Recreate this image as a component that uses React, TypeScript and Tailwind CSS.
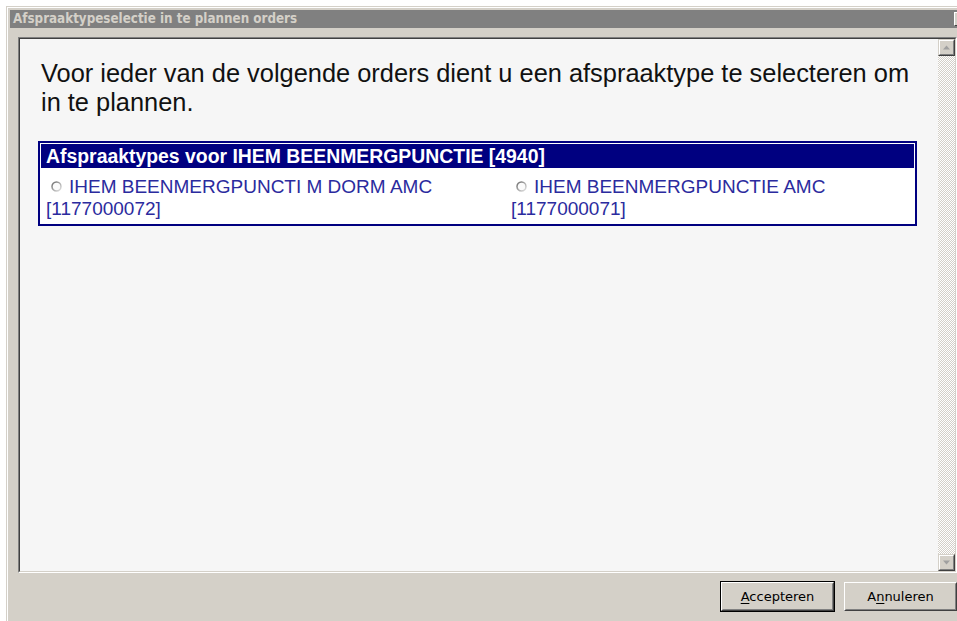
import { ReactNode } from "react";

const OPTIONS = [
  { label: "IHEM BEENMERGPUNCTI M DORM AMC", code: "1177000072" },
  { label: "IHEM BEENMERGPUNCTIE AMC", code: "1177000071" },
];

const Radio = () => (
  <svg
    width="11"
    height="11"
    viewBox="0 0 11 11"
    className="inline-block align-middle mr-[7px] ml-[5px] -mt-[2px]"
  >
    <defs>
      <linearGradient id="rb" x1="0" y1="0" x2="1" y2="1">
        <stop offset="0" stopColor="#6a6a6a" />
        <stop offset="1" stopColor="#e4e4e4" />
      </linearGradient>
    </defs>
    <circle cx="5.5" cy="5.5" r="4.5" fill="#fbfbfb" stroke="url(#rb)" strokeWidth="1.5" />
  </svg>
);

const ScrollArrow = ({ up }: { up?: boolean }) => (
  <div className="w-[17px] h-[17px] border border-t-[#d4d0c8] border-l-[#d4d0c8] border-b-[#404040] border-r-[#404040]">
    <div className="w-full h-full flex items-center justify-center bg-[#d4d0c8] border border-t-white border-l-white border-b-[#808080] border-r-[#808080]">
      <svg width="7" height="5" viewBox="0 0 7 5">
        {up ? (
          <path d="M3.5 0.5 L7 4.5 L0 4.5 Z" fill="#a0a0a0" />
        ) : (
          <path d="M0 0.5 L7 0.5 L3.5 4.5 Z" fill="#a0a0a0" />
        )}
      </svg>
    </div>
  </div>
);

const Button = ({ children, isDefault }: { children: ReactNode; isDefault?: boolean }) => {
  const face = (
    <div className="w-[113px] h-[29px] border border-t-white border-l-white border-b-[#404040] border-r-[#404040]">
      <div className="w-full h-full flex items-center justify-center border border-t-[#d4d0c8] border-l-[#d4d0c8] border-b-[#808080] border-r-[#808080] text-[13px] text-black font-['DejaVu_Sans',sans-serif]">
        {children}
      </div>
    </div>
  );
  return isDefault ? <div className="border border-black">{face}</div> : face;
};

export default function App() {
  return (
    <div className="w-[957px] h-[621px] overflow-hidden bg-white">
      <div className="ml-[6px] mt-[6px] w-[968px] h-[640px] border-l border-t border-[#d4d0c8] bg-[#d4d0c8]">
        <div className="h-full border-l border-t border-white p-[2px] flex flex-col">
          {/* caption */}
          <div className="h-[18px] bg-[#808080] flex items-center justify-between pl-[3px] pr-[2px]">
            <span className="text-[13.3px] font-bold text-[#d4d0c8] font-['DejaVu_Sans_Condensed',sans-serif] leading-none">
              Afspraaktypeselectie in te plannen orders
            </span>
            <div className="w-[16px] h-[14px] border border-t-white border-l-white border-b-[#404040] border-r-[#404040] bg-[#d4d0c8] flex items-center justify-center">
              <svg width="8" height="7" viewBox="0 0 8 7">
                <path d="M0.5 0.5 L7.5 6.5 M7.5 0.5 L0.5 6.5" stroke="#404040" strokeWidth="1.6" />
              </svg>
            </div>
          </div>

          <div className="pl-[8px] pt-[9px] flex flex-col">
            {/* sunken panel */}
            <div className="w-[939px] h-[536px] border border-t-[#808080] border-l-[#808080] border-b-white border-r-white">
              <div className="w-full h-full flex border border-t-[#404040] border-l-[#404040] border-b-[#d4d0c8] border-r-[#d4d0c8] bg-[#f6f6f6]">
                <div className="flex-1 px-[18px] pt-[20px] font-['Liberation_Sans',Arial,sans-serif]">
                  <p className="pl-[3px] text-[25.4px] leading-[28.5px] text-[#111]">
                    Voor ieder van de volgende orders dient u een afspraaktype te selecteren om in te plannen.
                  </p>

                  <div className="mt-[25px] w-[879px] border-2 border-[#000080] bg-white p-px">
                    <div className="h-[24px] bg-[#000080] pl-[5px] text-[19.4px] leading-[24px] font-bold text-white">
                      Afspraaktypes voor IHEM BEENMERGPUNCTIE [4940]
                    </div>
                    <div className="grid grid-cols-[465px_1fr] text-[19px] leading-[22px] text-[#2b2b9e]">
                      {OPTIONS.map((o) => (
                        <div key={o.code} className="pl-[5px] pt-[8px] pb-[3px]">
                          <Radio />
                          {o.label} [{o.code}]
                        </div>
                      ))}
                    </div>
                  </div>
                </div>

                {/* vertical scrollbar */}
                <div className="w-[17px] flex flex-col">
                  <ScrollArrow up />
                  <div className="flex-1 bg-[image:repeating-conic-gradient(#d4d0c8_0_25%,#ffffff_0_50%)] bg-[length:2px_2px]" />
                  <ScrollArrow />
                </div>
              </div>
            </div>

            {/* buttons */}
            <div className="w-[939px] h-[47px] flex items-center justify-end gap-[9px]">
              <Button isDefault>
                <span>
                  <span className="underline underline-offset-2">A</span>ccepteren
                </span>
              </Button>
              <Button>
                <span>
                  A<span className="underline underline-offset-2">n</span>nuleren
                </span>
              </Button>
            </div>
          </div>
        </div>
      </div>
    </div>
  );
}
